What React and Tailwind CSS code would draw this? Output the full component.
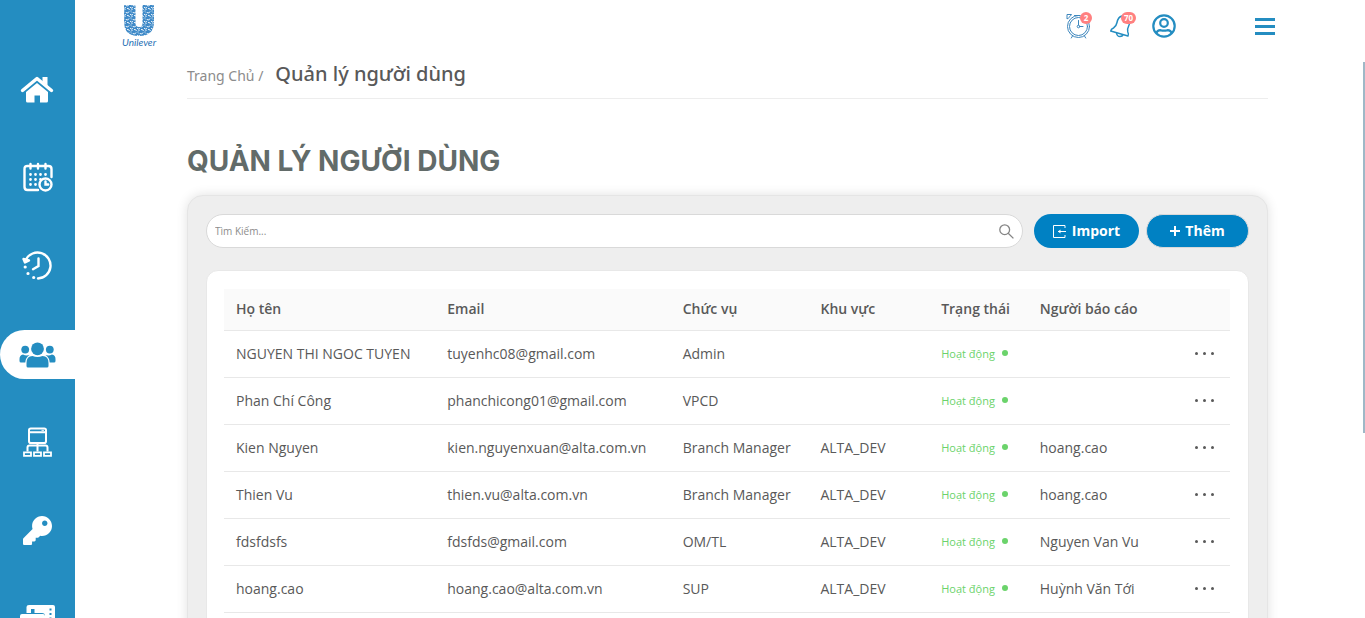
import { FaKey } from "react-icons/fa";

function HomeIcon() {
  return (
    <svg width="34" height="28" viewBox="1 1 34 28" className="overflow-visible" fill="currentColor" aria-hidden="true">
      <path d="M22.500 1h5v9l-5-4.500z" />
      <path d="M2.500 14.500 17 2.500l14.500 12" fill="none" stroke="currentColor" strokeWidth="3.400" strokeLinecap="round" strokeLinejoin="round" />
      <path d="M17 7 28 16v9q0 1.500-1.500 1.500H20v-7h-5.500v7H7.500Q6 26.500 6 25v-9z" />
    </svg>
  );
}

function CalendarIcon() {
  return (
    <svg width="30" height="30" viewBox="0 2 30 30" className="overflow-visible" fill="none" stroke="currentColor" strokeWidth="2.400" strokeLinecap="round" aria-hidden="true">
      <path d="M28.500 15V7q0-3-3-3h-21q-3 0-3 3v18q0 3 3 3H15" />
      <path d="M7.500 2v4.500M15 2v4.500M22.500 2v4.500" />
      <path d="M7.500 12.500h.01M12.500 12.500h.01M17.500 12.500h.01M22.500 12.500h.01M7.500 17.500h.01M12.500 17.500h.01M17.500 17.500h.01M7.500 22.500h.01M12.500 22.500h.01" strokeWidth="2.800" />
      <circle cx="22.500" cy="22.500" r="6" />
      <path d="M22.500 19.500v3h2.700" />
    </svg>
  );
}

function HistoryIcon() {
  return (
    <svg width="32" height="30" viewBox="1 2 32 30" className="overflow-visible" fill="none" stroke="currentColor" strokeWidth="2.400" strokeLinecap="round" aria-hidden="true">
      <path d="M5 9.500A13 13 0 1 1 17 28.500" />
      <path d="M2.500 9 4 12.500l4-2z" strokeLinejoin="round" fill="currentColor" />
      <path d="M17.500 8.500v7.500l-5.500 3.200" />
      <path d="M4.200 17h.01M7 23.500h.01M12.700 27.500h.01" strokeWidth="3.200" />
    </svg>
  );
}

function PeopleIcon() {
  return (
    <svg width="36" height="26" viewBox="0 0 36 26" className="overflow-visible" fill="currentColor" aria-hidden="true">
      <circle cx="17.500" cy="6.800" r="6.400" />
      <circle cx="5.200" cy="7.600" r="3.900" />
      <circle cx="29.800" cy="7.600" r="3.900" />
      <path d="M6.500 24V21q0-7 6-7 5 2 10 0 6 0 6 7v3q0 1.500-1.500 1.500H8Q6.500 25.500 6.500 24z" />
      <path d="M-.5 19v-2q0-4 3.500-4.500 3 1.500 6.500.5-4 2.500-4.200 7.500H1Q-.5 20.500-.5 19zM35.500 19v-2q0-4-3.500-4.500-3 1.500-6.500.5 4 2.500 4.200 7.500H34q1.500 0 1.500-1.500z" />
    </svg>
  );
}

function NetworkIcon() {
  return (
    <svg width="29" height="30" viewBox="0 1 29 30" className="overflow-visible" fill="none" stroke="currentColor" strokeWidth="2" aria-hidden="true">
      <rect x="6" y="1.500" width="17" height="14.500" rx="1.800" />
      <path d="M6 5.200h17M14.500 16v8.500M4.500 24.500v-4q0-2 2-2h16q2 0 2 2v4" />
      <path d="M18.500 3.300h2.500" strokeWidth="1" />
      <path d="M1 25.300h7v3.500H1zM11 25.300h7v3.500h-7zM21 25.300h7v3.500h-7z" strokeWidth="1.800" />
    </svg>
  );
}

function ServerIcon() {
  return (
    <svg width="36" height="28" viewBox="0 0 36 28" className="overflow-visible" fill="currentColor" aria-hidden="true">
      <path fillRule="evenodd" d="M9 0h24q2 0 2 2v18q0 2-2 2h-8V11q0-3-3-3H6.500V2q0-2 2.500-2zM11 4v4h3.500V4zM29.500 3.500v2h2v-2zM29.500 8v2h2V8zM29.500 12.500v2h2v-2z" />
      <path fillRule="evenodd" d="M2 9h21q2 0 2 2v15q0 2-2 2H2q-2 0-2-2V11q0-2 2-2zM3.500 14.500v3H9v-3z" />
    </svg>
  );
}

function ClockIcon() {
  return (
    <svg width="26" height="26" viewBox="-1 0 26 26" fill="none" stroke="currentColor" strokeWidth="1" strokeLinecap="round" aria-hidden="true">
      <circle cx="12.500" cy="13.500" r="11" />
      <circle cx="12.500" cy="13.500" r="9" />
      <circle cx="12.500" cy="13.500" r="1.300" />
      <path d="M12.500 7.500v4.500M14 13.500h3M6.500 23l-1.200 2M18.500 23l1.200 2M8.500 2.500h5M1 5.500V1.500h4.500L4 3.500 2.500 5z" />
    </svg>
  );
}

function BellIcon() {
  return (
    <svg width="26" height="26" viewBox="0 1 26 26" fill="none" stroke="currentColor" strokeWidth="1.500" strokeLinejoin="round" strokeLinecap="round" aria-hidden="true">
      <path d="M13 4Q9 5 8 10.500q-.800 4-3.500 5.500Q2 17 1.700 19L19 24q1-1.500-.2-4-.8-3 1.200-7 2-5-2-8-2-1.500-5-1z" />
      <path d="M7.500 21q.500 3.500 3.500 3.500 2.500 0 3-1.700" />
    </svg>
  );
}

function ProfileIcon() {
  return (
    <svg width="24" height="24" viewBox="0 0 24 24" fill="none" stroke="currentColor" strokeWidth="2.200" aria-hidden="true">
      <circle cx="12" cy="12" r="10.700" />
      <circle cx="12" cy="9" r="3.800" />
      <path d="M4 19.500q1.500-3.500 4.500-3.300 3.500 1 7 0 3-.2 4.500 3.300" />
    </svg>
  );
}

function Logo() {
  return (
    <svg width="40" height="44" viewBox="0 0 40 44" aria-label="Unilever" role="img">
      <defs>
        <pattern id="flecks" width="7" height="7" patternUnits="userSpaceOnUse">
          <rect width="7" height="7" fill="#3f8ac8" />
          <path d="M0 1.500q2 1.500 3-1M4 3q1 2 3 .5M1 4.500q2-.5 2.500 1.500M5 6.500 6.500 5M5 .5l1 1" stroke="#eef5fb" strokeWidth="1" fill="none" />
        </pattern>
      </defs>
      <path d="M5 1h11.500v18q0 4 3.500 4t3.500-4V1H35v17q0 14-15 14T5 18z" fill="url(#flecks)" />
      <text x="20" y="42" textAnchor="middle" fill="#1f6fb4" fontFamily="Lato, sans-serif" fontStyle="italic" fontWeight="400" fontSize="10">Unilever</text>
    </svg>
  );
}

const navItems = [
  { label: "Trang chủ", Icon: HomeIcon },
  { label: "Lịch", Icon: CalendarIcon },
  { label: "Lịch sử", Icon: HistoryIcon },
  { label: "Người dùng", Icon: PeopleIcon, active: true },
  { label: "Sơ đồ", Icon: NetworkIcon },
  { label: "Phân quyền", Icon: () => <FaKey size={29} aria-hidden="true" /> },
  { label: "Thiết bị", Icon: ServerIcon },
];

const users = [
  { name: "NGUYEN THI NGOC TUYEN", email: "tuyenhc08@gmail.com", role: "Admin", area: "", manager: "" },
  { name: "Phan Chí Công", email: "phanchicong01@gmail.com", role: "VPCD", area: "", manager: "" },
  { name: "Kien Nguyen", email: "kien.nguyenxuan@alta.com.vn", role: "Branch Manager", area: "ALTA_DEV", manager: "hoang.cao" },
  { name: "Thien Vu", email: "thien.vu@alta.com.vn", role: "Branch Manager", area: "ALTA_DEV", manager: "hoang.cao" },
  { name: "fdsfdsfs", email: "fdsfds@gmail.com", role: "OM/TL", area: "ALTA_DEV", manager: "Nguyen Van Vu" },
  { name: "hoang.cao", email: "hoang.cao@alta.com.vn", role: "SUP", area: "ALTA_DEV", manager: "Huỳnh Văn Tới" },
];

function Sidebar() {
  return (
    <nav className="flex w-[75px] shrink-0 flex-col gap-[39px] overflow-hidden bg-[#248dc1] pt-[66px]">
      {navItems.map(({ label, Icon, active }) => (
        <a
          key={label}
          href="#"
          aria-label={label}
          className={
            active
              ? "flex h-[49px] shrink-0 items-center justify-center rounded-l-full bg-white text-[#248dc1]"
              : "flex h-[49px] shrink-0 items-center justify-center text-white"
          }
        >
          <Icon />
        </a>
      ))}
    </nav>
  );
}

function Header() {
  return (
    <header className="flex h-[52px] shrink-0 items-center justify-between pr-[90px] pl-11">
      <a href="#"><Logo /></a>
      <div className="flex items-center text-[#248dc1]">
        <button type="button" aria-label="Nhắc nhở" className="relative mr-[18px] text-[#3c86bd]">
          <ClockIcon />
          <span className="absolute -top-[1px] -right-[1px] flex size-3 items-center justify-center rounded-full bg-[#ff8080] text-[8px] font-bold text-white">2</span>
        </button>
        <button type="button" aria-label="Thông báo" className="relative mr-[17px]">
          <BellIcon />
          <span className="absolute -top-[1px] -right-[1px] flex h-3 w-[15px] items-center justify-center rounded-full bg-[#ff8080] text-[8px] font-bold text-white">70</span>
        </button>
        <button type="button" aria-label="Tài khoản"><ProfileIcon /></button>
        <button type="button" aria-label="Menu" className="ml-[79px] flex w-5 flex-col gap-1">
          <span className="h-[3px] w-full bg-current" />
          <span className="h-[3px] w-full bg-current" />
          <span className="h-[3px] w-full bg-current" />
        </button>
      </div>
    </header>
  );
}

function Toolbar() {
  return (
    <div className="flex items-center">
      <label className="flex h-[34px] flex-1 items-center rounded-full border border-[#d9d9d9] bg-white px-2">
        <input type="text" aria-label="Tìm kiếm" placeholder="Tìm Kiếm..." className="min-w-0 flex-1 text-[10px] outline-none placeholder:text-[#8c8c8c]" />
        <svg width="15" height="15" viewBox="0 0 15 15" fill="none" stroke="#858585" strokeWidth="1.300" aria-hidden="true">
          <circle cx="5.700" cy="5.700" r="4.900" />
          <path d="m9.200 9.200 5.200 5.200" />
        </svg>
      </label>
      <button type="button" className="ml-[11px] flex h-[34px] w-[105px] items-center justify-center gap-[6px] rounded-full bg-[#0081c3] text-sm font-bold text-white">
        <svg width="13" height="13" viewBox="0 0 13 13" fill="none" stroke="currentColor" strokeWidth="1" aria-hidden="true">
          <path d="M12 3V.500H.500v12H12V10M5 6.500h8" />
          <path d="M5 6.500 7.500 4.500v4z" fill="currentColor" stroke="none" />
        </svg>
        Import
      </button>
      <button type="button" className="ml-[7px] flex h-[34px] w-[103px] items-center justify-center gap-[5px] rounded-full border border-[#d9d9d9] bg-[#0081c3] text-sm font-bold text-white">
        <svg width="10" height="10" viewBox="0 0 10 10" stroke="currentColor" strokeWidth="2" aria-hidden="true">
          <path d="M5 0v10M0 5h10" />
        </svg>
        Thêm
      </button>
    </div>
  );
}

function UserTable() {
  return (
    <table className="w-full table-fixed border-collapse text-left text-sm text-[#595959]">
      <colgroup>
        <col className="w-[21%]" />
        <col className="w-[23.400%]" />
        <col className="w-[13.700%]" />
        <col className="w-[12%]" />
        <col className="w-[9.800%]" />
        <col className="w-[15%]" />
        <col />
      </colgroup>
      <thead>
        <tr className="h-[41px] border-b border-[#e8e8e8] bg-[#fafafa] whitespace-nowrap">
          {["Họ tên", "Email", "Chức vụ", "Khu vực", "Trạng thái", "Người báo cáo"].map((h) => (
            <th key={h} scope="col" className="pl-3 font-semibold">{h}</th>
          ))}
          <td />
        </tr>
      </thead>
      <tbody>
        {users.map((u) => (
          <tr key={u.email} className="h-[47px] border-b border-[#e8e8e8] whitespace-nowrap">
            <td className="pl-3">{u.name}</td>
            <td className="pl-3">{u.email}</td>
            <td className="pl-3">{u.role}</td>
            <td className="pl-3">{u.area}</td>
            <td className="pl-3 text-[11px] text-[#6bd36b]">
              <span className="flex items-center gap-[7px]">
                Hoạt động
                <span className="size-[6px] rounded-full bg-current" />
              </span>
            </td>
            <td className="pl-3">{u.manager}</td>
            <td className="pr-4">
              <button type="button" aria-label="Thao tác" className="ml-auto flex gap-[5px]">
                <span className="size-[3px] rounded-full bg-current" />
                <span className="size-[3px] rounded-full bg-current" />
                <span className="size-[3px] rounded-full bg-current" />
              </button>
            </td>
          </tr>
        ))}
      </tbody>
    </table>
  );
}

export default function App() {
  return (
    <div className="relative flex h-screen overflow-hidden bg-white font-['Open_Sans','Noto_Sans',sans-serif]">
      <Sidebar />
      <div className="flex min-w-0 flex-1 flex-col">
        <Header />
        <main className="min-h-0 flex-1 overflow-y-auto pr-[97px] pl-28 [scrollbar-width:none]">
          <div className="flex h-[47px] items-baseline gap-3 border-b border-[#ededed] pt-2 font-['Noto_Sans',sans-serif]">
            <a href="#" className="text-sm text-[#8c8c8c]">Trang Chủ /</a>
            <span className="text-[20px] leading-7 font-medium text-[#595959]">Quản lý người dùng</span>
          </div>
          <h1 className="mt-[42px] font-['Inter',sans-serif] text-[28px] leading-10 font-bold text-[#626b69]">QUẢN LÝ NGƯỜI DÙNG</h1>
          <section className="mt-[14px] rounded-2xl border border-[#e5e5e5] bg-[#eeeeee] p-[18px] pb-10 shadow-[0_0_12px_rgba(0,0,0,0.12)]">
            <Toolbar />
            <div className="mt-[22px] rounded-xl border border-[#e8e8e8] bg-white pt-[18px] pr-[18px] pb-8 pl-[17px]">
              <UserTable />
            </div>
          </section>
        </main>
      </div>
      <div aria-hidden="true" className="absolute top-[62px] right-0 h-[60%] w-[2px] bg-[#9fb8c7]" />
    </div>
  );
}
